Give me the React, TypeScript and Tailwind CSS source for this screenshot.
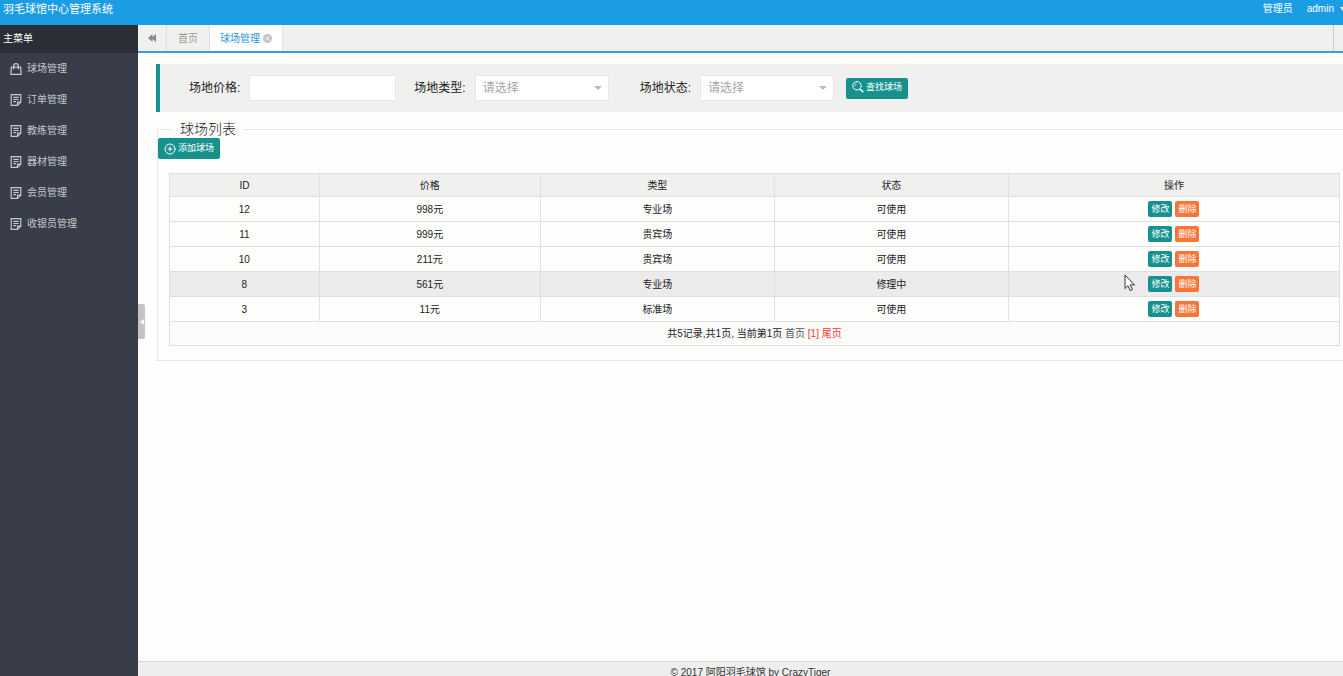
import type { ReactNode } from 'react'
import { CirclePlus } from 'lucide-react'
import clsx from 'clsx'

const menus = [
  { name: '球场管理', icon: 'bag' },
  { name: '订单管理', icon: 'note' },
  { name: '教练管理', icon: 'note' },
  { name: '器材管理', icon: 'note' },
  { name: '会员管理', icon: 'note' },
  { name: '收银员管理', icon: 'note' },
]

const courts = [
  { id: 12, price: '998元', type: '专业场', status: '可使用' },
  { id: 11, price: '999元', type: '贵宾场', status: '可使用' },
  { id: 10, price: '211元', type: '贵宾场', status: '可使用' },
  { id: 8, price: '561元', type: '专业场', status: '修理中' },
  { id: 3, price: '11元', type: '标准场', status: '可使用' },
]

const activeId = 8

const BagIcon = () => (
  <svg viewBox="0 0 12 12" className="size-3" fill="none" stroke="currentColor" strokeWidth="1.2">
    <path d="M1.4 4.2h9.2l.6 7.2H.8zM3.6 6.4V3.2a2.4 2.5 0 0 1 4.8 0v3.2" />
  </svg>
)

const NoteIcon = () => (
  <svg viewBox="0 0 12 12" className="size-3" fill="none" stroke="currentColor" strokeWidth="1.2">
    <path d="M7.5 11.4H1.2V.6h9.6v7.6zM7.5 11.4V8.2h3.3M3.3 3.4h5.4M3.3 5.5h5.4M3.3 7.6h2.8" />
  </svg>
)

const SearchIcon = () => (
  <svg viewBox="0 0 12 12" className="mb-0.5 size-3" fill="none" stroke="currentColor">
    <circle cx="5" cy="4.8" r="4.2" />
    <path d="M2.8 5a2.2 2.2 0 0 1 1.8-2.3" strokeWidth=".7" />
    <path d="M8 8l3.3 3.2" strokeWidth="1.6" />
  </svg>
)

const Header = () => (
  <header className="flex h-[25px] shrink-0 items-start justify-between bg-[#1b9de6] pl-[3px] leading-[18px] text-white">
    <h1 className="text-[11px]">羽毛球馆中心管理系统</h1>
    <div className="flex text-[10px]">
      <span>管理员</span>
      <button className="ml-3.5 flex items-center gap-1.5">
        admin
        <svg viewBox="0 0 6 4" className="-mr-[3px] h-1 w-1.5" fill="currentColor">
          <path d="M0 0h6L3 4z" />
        </svg>
      </button>
    </div>
  </header>
)

const Sidebar = () => (
  <aside className="w-[138px] shrink-0 bg-[#393d49] text-[10px]">
    <h2 className="h-7 bg-[#2b2e37] pl-[3px] leading-7 text-white">主菜单</h2>
    <nav>
      {menus.map((menu) => (
        <a
          key={menu.name}
          href="#"
          className="flex h-[31px] items-center gap-[5px] pl-2.5 text-[#c6c8cc]"
        >
          {menu.icon === 'bag' ? <BagIcon /> : <NoteIcon />}
          {menu.name}
        </a>
      ))}
    </nav>
  </aside>
)

const TabBar = () => (
  <div className="flex h-7 border-b-2 border-[#3d9ade] bg-[#f0f0ef] text-[10px] text-[#999]">
    <button aria-label="收起" className="flex w-[29px] items-center justify-center border-r border-[#ddd]">
      <svg viewBox="0 0 8 8" className="size-2" fill="#888">
        <path d="M4.5 0v8L0 4zM8 0v8L3.5 4z" />
      </svg>
    </button>
    <button className="border-r border-[#e2e2e2] px-[11px]">首页</button>
    <button className="flex items-center gap-[3px] border-r border-[#e2e2e2] bg-white px-2.5 text-[#2e95dc]">
      球场管理
      <svg viewBox="0 0 9 9" className="size-[9px]">
        <circle cx="4.5" cy="4.5" r="4.5" fill="#c4c4c4" />
        <path d="M2.7 2.7l3.6 3.6M6.3 2.7L2.7 6.3" stroke="#fff" />
      </svg>
    </button>
    <div className="flex-1" />
    <div className="w-2.5 border-l border-[#ccc]" />
  </div>
)

const Picker = ({ id, label }: { id: string; label: string }) => (
  <div className="flex items-center gap-[9px]">
    <label htmlFor={id}>{label}</label>
    <div className="relative">
      <select
        id={id}
        className="h-[26px] w-[134px] appearance-none border border-[#e8e8e8] bg-white pl-[7px] text-[#a5a5a5]"
      >
        <option>请选择</option>
      </select>
      <svg
        viewBox="0 0 8 4"
        className="pointer-events-none absolute top-[11px] right-[7px] h-1 w-2"
        fill="#bbb"
      >
        <path d="M0 0h8L4 4z" />
      </svg>
    </div>
  </div>
)

const ActionButton = ({ children, className }: { children: ReactNode; className?: string }) => (
  <button
    className={clsx(
      'flex h-[21px] w-[62px] items-center justify-center gap-0.5 rounded-xs bg-[#16918d] text-[9px] text-white',
      className,
    )}
  >
    {children}
  </button>
)

const SearchBar = () => (
  <form className="ml-[18px] flex h-12 items-center border-l-4 border-[#16918d] bg-[#f0f0ef] pl-[29px] text-[12px] text-[#222]">
    <div className="flex items-center gap-[9px]">
      <label htmlFor="price">场地价格:</label>
      <input id="price" className="h-[26px] w-[147px] border border-[#e8e8e8] bg-white px-2" />
    </div>
    <div className="ml-[18px] flex gap-[31px]">
      <Picker id="type" label="场地类型:" />
      <Picker id="status" label="场地状态:" />
    </div>
    <ActionButton className="ml-3">
      <SearchIcon />
      查找球场
    </ActionButton>
  </form>
)

const CourtTable = () => (
  <table className="w-full table-fixed border-collapse text-center text-[10px] text-[#222] [&_td]:border [&_td]:border-[#e0e0e0] [&_th]:border [&_th]:border-[#e0e0e0]">
    <colgroup>
      <col className="w-[12.8%]" />
      <col className="w-[18.9%]" />
      <col className="w-[20%]" />
      <col className="w-[20%]" />
      <col />
    </colgroup>
    <thead>
      <tr className="h-[23px] bg-[#f0f0ef] *:font-normal">
        <th>ID</th>
        <th>价格</th>
        <th>类型</th>
        <th>状态</th>
        <th>操作</th>
      </tr>
    </thead>
    <tbody>
      {courts.map((court) => (
        <tr key={court.id} className={clsx('h-[25px]', court.id === activeId && 'bg-[#ebebeb]')}>
          <td>{court.id}</td>
          <td>{court.price}</td>
          <td>{court.type}</td>
          <td>{court.status}</td>
          <td>
            <div className="flex justify-center gap-[3px] text-[9px] leading-4 text-white">
              <button className="h-4 w-6 rounded-xs bg-[#16918d]">修改</button>
              <button className="h-4 w-6 rounded-xs bg-[#fb7538]">删除</button>
            </div>
          </td>
        </tr>
      ))}
      <tr className="h-6 bg-[#fbfbfa]">
        <td colSpan={5}>
          共5记录,共1页, 当前第1页{' '}
          <a href="#" className="text-[#555]">
            首页
          </a>{' '}
          <a href="#" className="text-[#f0402e]">
            [1]
          </a>{' '}
          <a href="#" className="text-[#f0402e]">
            尾页
          </a>
        </td>
      </tr>
    </tbody>
  </table>
)

const Pointer = () => (
  <svg
    viewBox="0 0 12 18"
    className="pointer-events-none absolute top-[274px] left-[1124px] h-[18px] w-3"
    fill="#fff"
    stroke="#333"
  >
    <path d="M1 1v13.5l3-2.8 2.2 5 2.2-1-2.2-4.8h4.3z" />
  </svg>
)

const App = () => (
  <div className="relative flex h-screen flex-col overflow-hidden bg-[#fefefd] font-['Liberation_Sans','Noto_Sans_CJK_SC',sans-serif]">
    <Header />
    <div className="flex min-h-0 flex-1">
      <Sidebar />
      <div className="relative flex min-w-0 flex-1 flex-col">
        <TabBar />
        <button
          aria-label="收起菜单"
          className="absolute top-[279px] left-0 flex h-[35px] w-[7px] items-center justify-center rounded-r-xs bg-[#c4c4c4]"
        >
          <svg viewBox="0 0 4 6" className="h-1.5 w-1" fill="#fff">
            <path d="M4 0v6L0 3z" />
          </svg>
        </button>
        <main className="min-h-0 flex-1 pt-[11px]">
          <SearchBar />
          <fieldset className="mt-2 ml-[19px] border border-r-0 border-[#e6e6e6] pb-3.5">
            <legend className="ml-3.5 px-2 text-[14px] leading-[18px] font-light text-[#222]">
              球场列表
            </legend>
            <ActionButton>
              <CirclePlus className="size-3" strokeWidth={2} />
              添加球场
            </ActionButton>
            <div className="mt-3.5 mr-[3px] ml-[11px]">
              <CourtTable />
            </div>
          </fieldset>
        </main>
        <footer className="h-[15px] border-t border-[#d8d8d8] bg-[#eee] pt-[3px] pl-5 text-center text-[10px] text-[#333]">
          © 2017 阿阳羽毛球馆 by CrazyTiger
        </footer>
      </div>
    </div>
    <Pointer />
  </div>
)

export default App
